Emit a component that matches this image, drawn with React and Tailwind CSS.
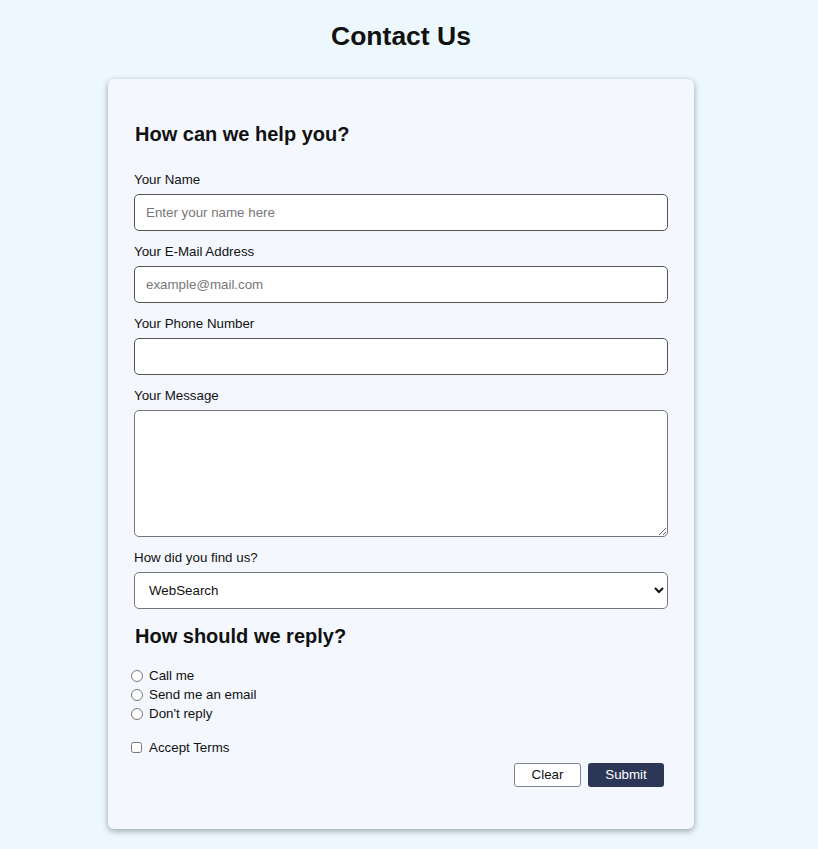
import React from 'react';

const Field = ({ label, children }) => (
  <div className="flex flex-col">
    <label className="text-[13.33px] leading-[18px] text-[#111] mb-[5px]">{label}</label>
    {children}
  </div>
);

const inputCls =
  'h-[37px] w-full rounded-[5px] border border-[#555] bg-white px-[11px] text-[13.33px] text-[#111] placeholder:text-[#777] outline-none';

export default function App() {
  return (
    <div
      className="min-h-[849px] bg-[#edf7fe] pr-[16px]"
      style={{ fontFamily: '"Liberation Sans", Arial, sans-serif' }}
    >
      <h1 className="pt-[20px] text-center text-[26.5px] font-bold leading-[32px] text-[#111]">Contact Us</h1>

      <form className="mx-auto mt-[27px] w-[586px] rounded-[6px] bg-[#f4f8fe] px-[26px] pt-[43px] pb-[42px] shadow-[0_2px_6px_rgba(0,0,0,0.35)]">
        <h2 className="text-[20px] font-bold leading-[24px] text-[#111] pl-[1px]">How can we help you?</h2>

        <div className="mt-[25px] flex flex-col gap-[12px]">
          <Field label="Your Name">
            <input type="text" placeholder="Enter your name here" className={inputCls} />
          </Field>
          <Field label="Your E-Mail Address">
            <input type="email" placeholder="example@mail.com" className={inputCls} />
          </Field>
          <Field label="Your Phone Number">
            <input type="tel" className={inputCls} />
          </Field>
          <Field label="Your Message">
            <textarea className="h-[127px] w-full rounded-[5px] border border-[#777] bg-white px-[11px] py-[6px] text-[13.33px] outline-none" />
          </Field>
          <Field label="How did you find us?">
            <select
              defaultValue="WebSearch"
              className="h-[37px] w-full rounded-[5px] border border-[#777] bg-white px-[10px] text-[13.33px] text-[#111] outline-none"
            >
              <option>WebSearch</option>
              <option>Friend</option>
              <option>Advertisement</option>
            </select>
          </Field>
        </div>

        <h2 className="mt-[15px] text-[20px] font-bold leading-[24px] text-[#111] pl-[1px]">How should we reply?</h2>

        <div className="mt-[18px] flex flex-col text-[13.33px] leading-[19px] text-[#111]">
          {['Call me', 'Send me an email', "Don't reply"].map((t) => (
            <label key={t} className="flex items-center -ml-[4px]">
              <input type="radio" name="reply" className="m-0 mr-[6px] ml-[1px] h-[12px] w-[12px]" />
              {t}
            </label>
          ))}
        </div>

        <label className="mt-[16px] flex items-center -ml-[4px] text-[13.33px] leading-[17px] text-[#111]">
          <input type="checkbox" className="m-0 mr-[7px] ml-[1px] h-[11px] w-[11px]" />
          Accept Terms
        </label>

        <div className="mt-[7px] flex justify-end gap-[7px] pr-[4px]">
          <button
            type="reset"
            className="h-[24px] w-[67px] rounded-[3px] border border-[#7b8498] bg-white text-[13.33px] text-[#111]"
          >
            Clear
          </button>
          <button
            type="submit"
            className="h-[24px] w-[76px] rounded-[3px] bg-[#2c3657] text-[13.33px] text-white"
          >
            Submit
          </button>
        </div>
      </form>
    </div>
  );
}
